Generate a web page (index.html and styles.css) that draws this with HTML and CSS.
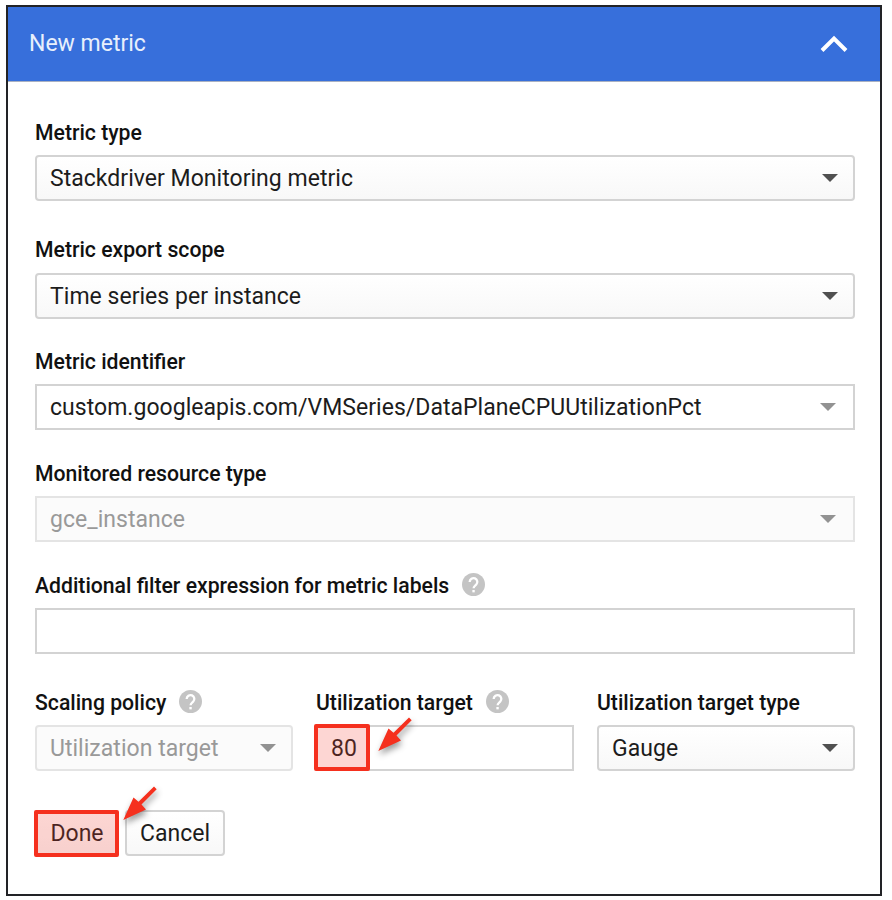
FILE: index.html
```html
<!DOCTYPE html>
<html lang="en">
<head>
<meta charset="utf-8">
<title>New metric</title>
<link rel="stylesheet" href="styles.css">
</head>
<body>
<svg width="0" height="0" class="defs">
  <symbol id="help" viewBox="0 0 24 24"><circle cx="12" cy="12" r="12" fill="#c4c4c4"/><path d="M8 9.300a4 4 0 1 1 6.800 2.900c-1.600 1.400-2.700 1.900-2.700 3.800" fill="none" stroke="#fff" stroke-width="2.400"/><rect x="10.800" y="17.700" width="2.500" height="2.500" fill="#fff"/></symbol>
  <symbol id="arrow" viewBox="0 0 36 38"><path d="M1.300 35 11.500 12.500l5 4.300L32 1.500l2.700 2.700L19.500 19.500l4.500 5z" fill="#f5301e"/></symbol>
</svg>
<main class="panel">
  <header class="panel-header">
    <h1 class="title">New metric</h1>
    <svg class="chevron" viewBox="0 0 28 18"><path d="M2 15.500 14 3.500l12 12" fill="none" stroke="#fff" stroke-width="4"/></svg>
  </header>
  <form class="form">
    <div class="field field-type">
      <div class="label"><span>Metric type</span></div>
      <div class="control select"><span>Stackdriver Monitoring metric</span><i class="caret"></i></div>
    </div>
    <div class="field field-scope">
      <div class="label"><span>Metric export scope</span></div>
      <div class="control select"><span>Time series per instance</span><i class="caret"></i></div>
    </div>
    <div class="field">
      <div class="label"><span>Metric identifier</span></div>
      <div class="control combo"><span>custom.googleapis.com/VMSeries/DataPlaneCPUUtilizationPct</span><i class="caret"></i></div>
    </div>
    <div class="field">
      <div class="label"><span>Monitored resource type</span></div>
      <div class="control combo disabled"><span>gce_instance</span><i class="caret"></i></div>
    </div>
    <div class="field field-filter">
      <div class="label"><span>Additional filter expression for metric labels</span><svg class="help"><use href="#help"/></svg></div>
      <div class="control"></div>
    </div>
    <div class="columns">
      <div class="field">
        <div class="label"><span>Scaling policy</span><svg class="help"><use href="#help"/></svg></div>
        <div class="control select disabled"><span>Utilization target</span><i class="caret"></i></div>
      </div>
      <div class="field">
        <div class="label"><span>Utilization target</span><svg class="help"><use href="#help"/></svg></div>
        <div class="control value"><span>80</span><b class="mark mark-value"></b><svg class="arrow arrow-value"><use href="#arrow"/></svg></div>
      </div>
      <div class="field">
        <div class="label"><span>Utilization target type</span></div>
        <div class="control select"><span>Gauge</span><i class="caret"></i></div>
      </div>
    </div>
    <div class="actions">
      <div class="button done"><span>Done</span><b class="mark mark-done"></b><svg class="arrow arrow-done"><use href="#arrow"/></svg></div>
      <div class="button"><span>Cancel</span></div>
    </div>
  </form>
</main>
</body>
</html>
```
FILE: styles.css
```css
* { box-sizing: border-box; }
body { margin: 0; background: #fff; font-family: Roboto, "Liberation Sans", sans-serif; font-size: 23px; color: #1c1c1c; }
.defs { position: absolute; }
.panel { width: 876px; height: 891px; margin: 5px 0 0 6px; border: 2px solid #222326; }
.panel-header { height: 75px; padding: 0 32px 0 21px; display: flex; align-items: center; justify-content: space-between; background: #376fdb; border-bottom: 1px solid #a9b1c2; }
.title { margin: 0; padding-bottom: 2px; font-size: 23px; font-weight: 400; color: #e8effc; }
.chevron { width: 28px; height: 18px; }
.form { padding: 38px 25px 0 27px; }
.field { margin-bottom: 31px; }
.field-type { margin-bottom: 36px; }
.field-scope { margin-bottom: 30px; }
.field-scope .label { margin-bottom: 12px; }
.field-filter { margin-bottom: 36px; }
.label { display: flex; align-items: center; gap: 13px; height: 24px; margin-bottom: 11px; font-size: 21.2px; font-weight: 500; color: #111; white-space: nowrap; }
.help { width: 23px; height: 23px; margin-top: -1px; }
.control { position: relative; display: flex; align-items: center; justify-content: space-between; height: 46px; padding: 0 15px 0 13px; border: 2px solid #d3d3d3; background: #fff; letter-spacing: .03px; white-space: nowrap; }
.control span, .button span { padding-top: 1px; }
.select { border-radius: 4px; background: linear-gradient(#fff, #f8f8f8); }
.combo { padding-right: 17px; }
.caret { border: 8px solid transparent; border-top: 8px solid #505050; border-bottom: 0; }
.combo .caret { border-top-color: #929292; }
.disabled { background: #fbfbfb; border-color: #e4e4e4; color: #999; }
.disabled .caret { border-top-color: #929292; }
.columns { display: grid; grid-template-columns: 258px 258px 258px; gap: 23px; }
.columns .field { margin: 0; }
.actions { display: flex; gap: 6px; margin-top: 39px; }
.button { position: relative; height: 46px; width: 100px; display: flex; align-items: center; justify-content: center; border: 2px solid #d3d3d3; border-radius: 4px; background: linear-gradient(#fff, #f8f8f8); }
.done { z-index: 1; width: 84px; }
.mark { position: absolute; border: 4px solid #f5301e; border-radius: 2px; background: rgba(244, 67, 54, .22); }
.mark-value { left: -4px; top: -3px; width: 56px; height: 47px; }
.mark-done { left: -3px; top: -2px; width: 85px; height: 47px; }
.arrow { position: absolute; width: 36px; height: 38px; overflow: visible; filter: drop-shadow(1px 4px 3px rgba(0, 0, 0, .4)); }
.arrow-value { left: 59px; top: -11px; }
.arrow-done { left: 85px; top: -27px; }
```
